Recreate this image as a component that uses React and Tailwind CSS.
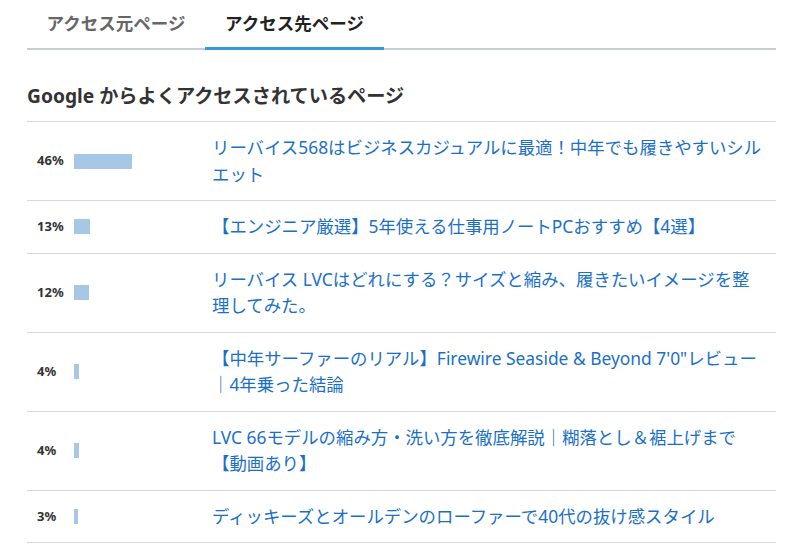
const rows = [
  { pct: 46, title: 'リーバイス568はビジネスカジュアルに最適！中年でも履きやすいシルエット' },
  { pct: 13, title: '【エンジニア厳選】5年使える仕事用ノートPCおすすめ【4選】' },
  { pct: 12, title: 'リーバイス LVCはどれにする？サイズと縮み、履きたいイメージを整理してみた。' },
  { pct: 4, title: '【中年サーファーのリアル】Firewire Seaside & Beyond 7\'0"レビュー｜4年乗った結論' },
  { pct: 4, title: 'LVC 66モデルの縮み方・洗い方を徹底解説｜糊落とし＆裾上げまで【動画あり】' },
  { pct: 3, title: 'ディッキーズとオールデンのローファーで40代の抜け感スタイル' },
]

export default function App() {
  return (
    <div
      className="min-h-screen bg-white px-[27px] text-[#333]"
      style={{ fontFamily: '"Noto Sans", "Noto Sans CJK JP", sans-serif' }}
    >
      <div className="flex border-b-2 border-[#c5cdd4]">
        <button className="w-[178px] pt-[10px] pb-[14px] text-[17.5px] font-bold text-[#666] leading-[26px] -mb-[2px]">
          アクセス元ページ
        </button>
        <button className="w-[179px] pt-[10px] pb-[11px] text-[17.5px] font-bold text-[#222] leading-[26px] border-b-[3px] border-[#3498db] -mb-[2px]">
          アクセス先ページ
        </button>
      </div>

      <h2 className="mt-[33px] mb-[12px] text-[19.2px] font-bold leading-[26px] text-[#333]">
        Google からよくアクセスされているページ
      </h2>

      <table className="w-full border-collapse">
        <tbody>
          {rows.map((r, i) => (
            <tr key={i} className="border-y border-[#d3d9e0]">
              <td className="w-[47px] pl-[10px] py-[12px] align-middle text-[13px] font-bold text-[#333]">
                {r.pct}%
              </td>
              <td className="w-[128px] py-[12px] align-middle">
                <div className="h-[15px] bg-[#a7c7e7]" style={{ width: `${Math.max(4, r.pct * 1.26)}px` }} />
              </td>
              <td className="pl-[10px] pr-[13px] pt-[12px] pb-[13px] align-middle text-[17.4px] leading-[26.5px] text-[#1a6fc9]">
                <a href="#" className="hover:underline">{r.title}</a>
              </td>
            </tr>
          ))}
        </tbody>
      </table>
    </div>
  )
}
